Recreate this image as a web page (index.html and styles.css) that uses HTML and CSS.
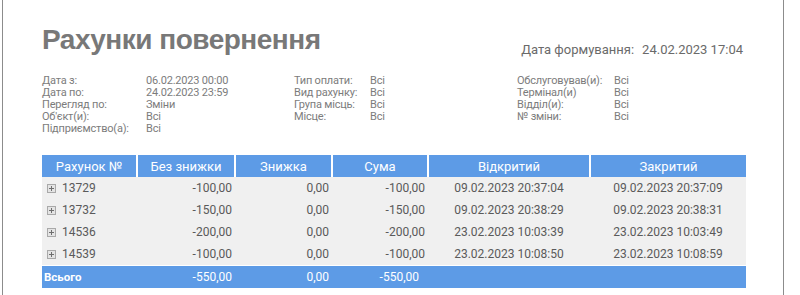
FILE: index.html
```html
<!DOCTYPE html>
<html lang="uk">
<head>
<meta charset="utf-8">
<link rel="stylesheet" href="styles.css">
</head>
<body>
<div class="page">
  <div class="head">
    <h1 class="title">Рахунки повернення</h1>
    <div class="formed"><span>Дата формування:</span><span>24.02.2023 17:04</span></div>
  </div>
  <div class="params">
    <div class="pcol c1">
      <div class="prow"><span class="pl">Дата з:</span><span>06.02.2023 00:00</span></div>
      <div class="prow"><span class="pl">Дата по:</span><span>24.02.2023 23:59</span></div>
      <div class="prow"><span class="pl">Перегляд по:</span><span>Зміни</span></div>
      <div class="prow"><span class="pl">Об'єкт(и):</span><span>Всі</span></div>
      <div class="prow"><span class="pl">Підприємство(а):</span><span>Всі</span></div>
    </div>
    <div class="pcol c2">
      <div class="prow"><span class="pl">Тип оплати:</span><span>Всі</span></div>
      <div class="prow"><span class="pl">Вид рахунку:</span><span>Всі</span></div>
      <div class="prow"><span class="pl">Група місць:</span><span>Всі</span></div>
      <div class="prow"><span class="pl">Місце:</span><span>Всі</span></div>
    </div>
    <div class="pcol c3">
      <div class="prow"><span class="pl">Обслуговував(и):</span><span>Всі</span></div>
      <div class="prow"><span class="pl">Термінал(и)</span><span>Всі</span></div>
      <div class="prow"><span class="pl">Відділ(и):</span><span>Всі</span></div>
      <div class="prow"><span class="pl">№ зміни:</span><span>Всі</span></div>
    </div>
  </div>
  <table class="grid">
    <colgroup>
      <col class="w1"><col class="w2"><col class="w3"><col class="w4"><col class="w5"><col class="w6">
    </colgroup>
    <thead>
      <tr><th>Рахунок №</th><th>Без знижки</th><th>Знижка</th><th>Сума</th><th>Відкритий</th><th>Закритий</th></tr>
    </thead>
    <tbody>
      <tr><td class="id"><span class="plus"></span>13729</td><td class="num">-100,00</td><td class="num">0,00</td><td class="num">-100,00</td><td class="dt">09.02.2023 20:37:04</td><td class="dt">09.02.2023 20:37:09</td></tr>
      <tr><td class="id"><span class="plus"></span>13732</td><td class="num">-150,00</td><td class="num">0,00</td><td class="num">-150,00</td><td class="dt">09.02.2023 20:38:29</td><td class="dt">09.02.2023 20:38:31</td></tr>
      <tr><td class="id"><span class="plus"></span>14536</td><td class="num">-200,00</td><td class="num">0,00</td><td class="num">-200,00</td><td class="dt">23.02.2023 10:03:39</td><td class="dt">23.02.2023 10:03:49</td></tr>
      <tr><td class="id"><span class="plus"></span>14539</td><td class="num">-100,00</td><td class="num">0,00</td><td class="num">-100,00</td><td class="dt">23.02.2023 10:08:50</td><td class="dt">23.02.2023 10:08:59</td></tr>
    </tbody>
    <tfoot>
      <tr><td class="tl">Всього</td><td class="num">-550,00</td><td class="num">0,00</td><td class="num tsum">-550,00</td><td></td><td></td></tr>
    </tfoot>
  </table>
</div>
</body>
</html>
```
FILE: styles.css
```css
html, body {
  margin: 0;
  padding: 0;
  background: #ffffff;
}
body {
  font-family: Roboto, "Liberation Sans", Arial, sans-serif;
}
.page {
  margin-left: 2px;
  width: 782px;
  height: 295px;
  border-left: 1px solid #8c8c8c;
  border-right: 1px solid #8c8c8c;
  padding-left: 39px;
  box-sizing: border-box;
  overflow: hidden;
}
.head {
  display: flex;
  align-items: flex-end;
  height: 58px;
}
.title {
  margin: 0;
  font-family: "Liberation Sans", Arial, sans-serif;
  font-weight: bold;
  font-size: 28px;
  color: #787878;
  line-height: 1;
  padding-bottom: 4px;
  letter-spacing: -0.5px;
}
.formed {
  margin-left: auto;
  margin-right: 40px;
  font-size: 13px;
  color: #6a6a6a;
  display: flex;
  gap: 8px;
  padding-bottom: 1px;
}
.params {
  display: flex;
  margin-top: 17px;
  font-size: 11px;
  color: #7c7c7c;
  letter-spacing: -0.2px;
}
.prow {
  display: flex;
  height: 12px;
  line-height: 12px;
}
.c1 { width: 252px; }
.c1 .pl { width: 104px; }
.c2 { width: 223px; }
.c2 .pl { width: 76px; }
.c3 .pl { width: 97px; }
.grid {
  margin-top: 20px;
  border-collapse: collapse;
  table-layout: fixed;
  width: 704px;
  font-size: 12px;
}
.w1 { width: 95px; }
.w2 { width: 98px; }
.w3 { width: 97px; }
.w4 { width: 96px; }
.w5 { width: 162px; }
.w6 { width: 156px; }
.grid th {
  background: #5d9be6;
  color: #ffffff;
  font-weight: normal;
  font-size: 13px;
  height: 22px;
  padding: 0;
  border-left: 2px solid #ffffff;
  text-align: center;
}
.grid th:first-child { border-left: none; }
.grid tbody td {
  background: #f0f0f0;
  color: #5a5a5a;
  height: 22px;
  padding: 0 3px;
}
.grid td.num { text-align: right; }
.grid td.dt { text-align: center; }
.grid td.id {
  padding-left: 5px;
}
.plus {
  display: inline-block;
  position: relative;
  width: 9px;
  height: 9px;
  border: 1px solid #a9a9a9;
  background: #e4e4e4;
  box-sizing: border-box;
  margin-right: 6px;
  vertical-align: -1px;
}
.plus::before, .plus::after {
  content: "";
  position: absolute;
  background: #6e6e6e;
}
.plus::before { left: 1px; right: 1px; top: 3px; height: 1px; }
.plus::after { top: 1px; bottom: 1px; left: 3px; width: 1px; }
.grid tfoot td {
  background: #5d9be6;
  color: #ffffff;
  height: 22px;
  padding: 0 3px;
  border-top: 1px solid #ffffff;
}
.grid tfoot td.tl {
  font-weight: bold;
  font-size: 11.5px;
  padding-left: 2px;
}
.grid tfoot td.tsum { padding-right: 9px; }
```
